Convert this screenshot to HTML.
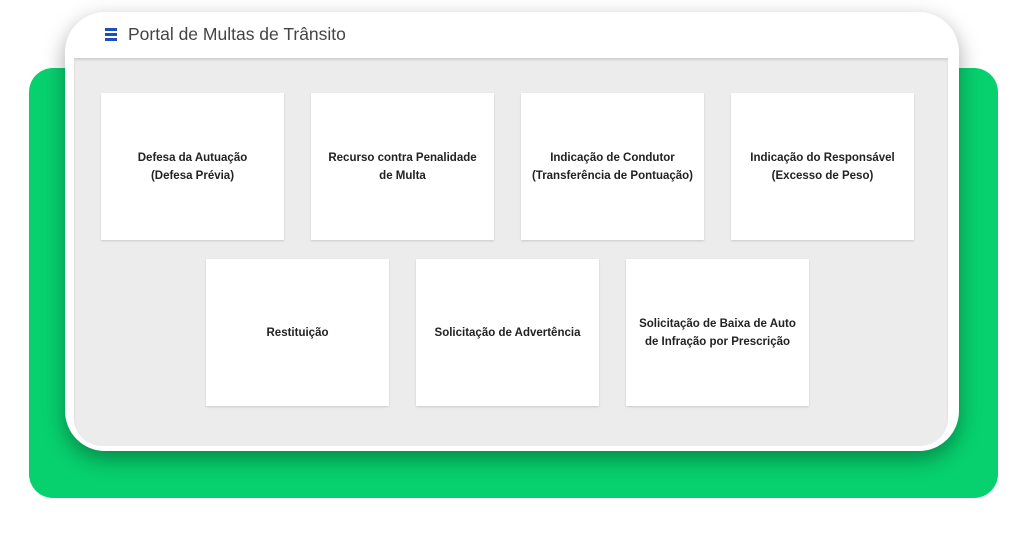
<!DOCTYPE html><html><head><style>
body{margin:0;width:1024px;height:536px;background:#fff;position:relative;overflow:hidden;font-family:"Liberation Sans",sans-serif}
.g{position:absolute;left:29px;top:68px;width:969px;height:430px;background:#07d16e;border-radius:24px}
.f{position:absolute;left:65px;top:12px;width:894px;height:439px;background:#fff;border-radius:40px;box-shadow:0 8px 22px rgba(0,0,0,.35)}
.in{position:absolute;left:74px;top:58px;width:874px;height:388px;background:#ececec;border-radius:0 0 28px 28px;box-shadow:inset 0 2px 2px rgba(0,0,0,.12)}
.t{position:absolute;left:128px;top:24px;font-size:17.5px;color:#444}
.h{position:absolute;left:105px;width:12px;height:2.5px;background:#1b4fbf}
.c{position:absolute;width:183px;height:147px;background:#fff;box-shadow:0 1px 2px rgba(0,0,0,.15);display:flex;align-items:center;justify-content:center;text-align:center;font-size:11.5px;font-weight:bold;color:#222;line-height:18px}
</style></head><body>
<div class="g"></div><div class="f"></div><div class="in"></div>
<div class="h" style="top:28px"></div><div class="h" style="top:33px"></div><div class="h" style="top:38px"></div>
<div class="t">Portal de Multas de Trânsito</div>
<div class="c" style="left:101px;top:93px">Defesa da Autuação<br>(Defesa Prévia)</div>
<div class="c" style="left:311px;top:93px">Recurso contra Penalidade<br>de Multa</div>
<div class="c" style="left:521px;top:93px">Indicação de Condutor<br>(Transferência de Pontuação)</div>
<div class="c" style="left:731px;top:93px">Indicação do Responsável<br>(Excesso de Peso)</div>
<div class="c" style="left:206px;top:259px">Restituição</div>
<div class="c" style="left:416px;top:259px">Solicitação de Advertência</div>
<div class="c" style="left:626px;top:259px">Solicitação de Baixa de Auto<br>de Infração por Prescrição</div>
</body></html>
